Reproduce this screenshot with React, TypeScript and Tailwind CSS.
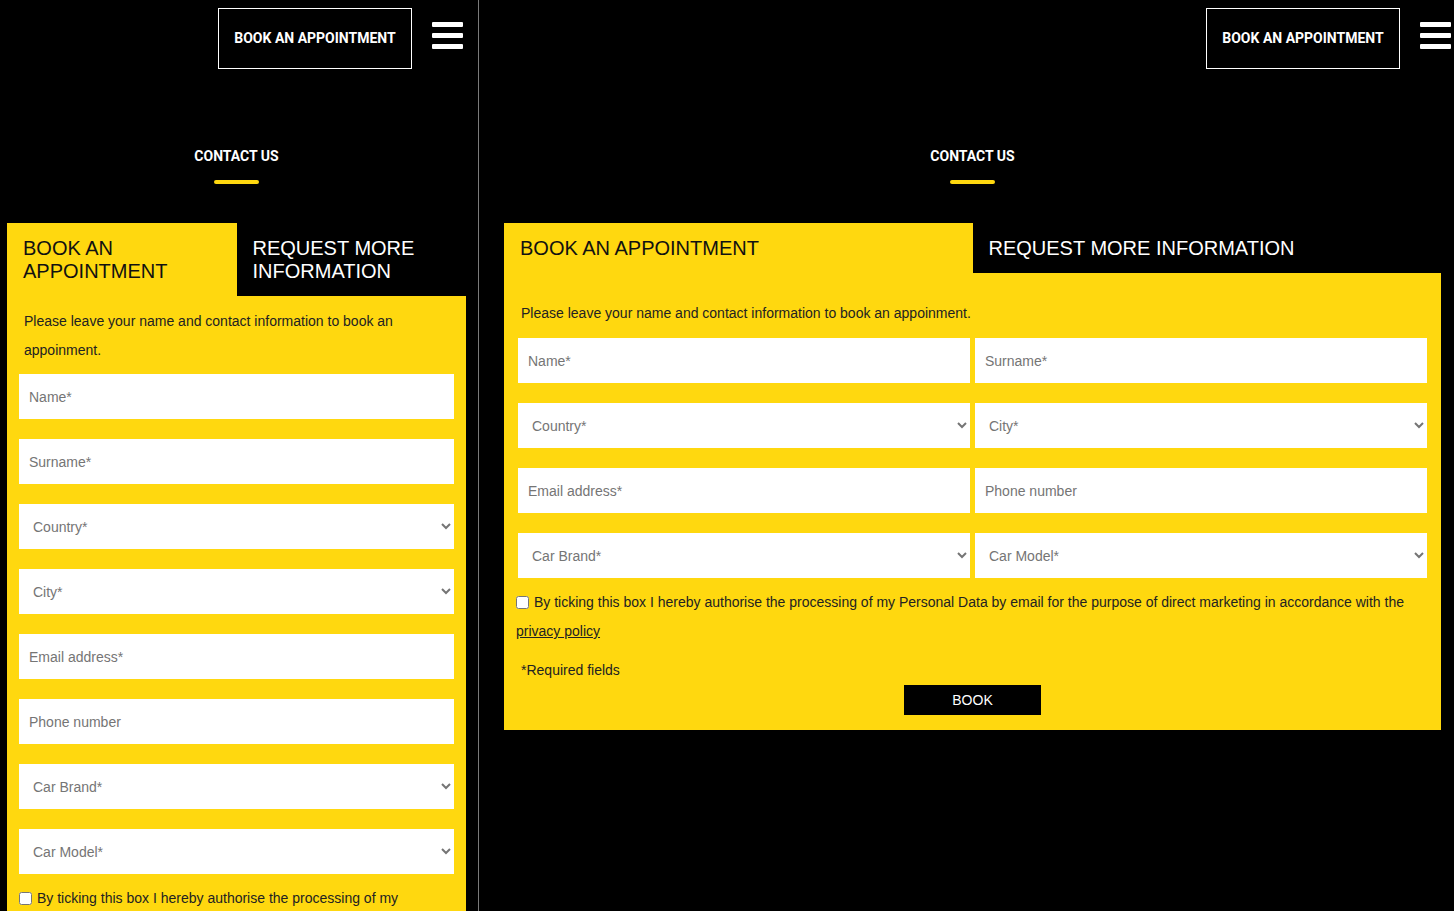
import React from 'react';

const Burger = () => (
  <div className="mt-[14px] flex w-[31px] flex-col gap-[6px]">
    <span className="block h-[5px] rounded-[1px] bg-white" />
    <span className="block h-[5px] rounded-[1px] bg-white" />
    <span className="block h-[5px] rounded-[1px] bg-white" />
  </div>
);

const TopBar = () => (
  <div className="flex items-start justify-end gap-[20px] pt-[8px] pr-[15px]">
    <button className="h-[61px] w-[194px] border border-white font-['Roboto',sans-serif] text-[14px] font-bold text-white">
      BOOK AN APPOINTMENT
    </button>
    <Burger />
  </div>
);

const Heading = () => (
  <div className="flex flex-col items-center">
    <h2 className="mt-[79px] font-['Roboto',sans-serif] text-[14px] leading-[17px] font-bold text-white">CONTACT US</h2>
    <span className="mt-[15px] block h-[4px] w-[45px] rounded-[2px] bg-[#ffd80f]" />
  </div>
);

const Field = ({ label }: { label: string }) => (
  <input
    placeholder={label}
    className="h-[45px] w-full bg-white pl-[10px] text-[14px] text-[#333] outline-none placeholder:text-[#757575]"
  />
);

const Pick = ({ label }: { label: string }) => (
  <select
    defaultValue=""
    className="h-[45px] w-full bg-white pl-[10px] text-[14px] text-[#757575] outline-none"
  >
    <option value="" disabled>
      {label}
    </option>
  </select>
);

const Tabs = () => (
  <div className="mt-[39px] grid grid-cols-2 text-[20px] leading-[23px]">
    <div className="bg-[#ffd80f] pt-[14px] pr-2 pb-[13px] pl-4 text-[#111]">BOOK AN APPOINTMENT</div>
    <div className="bg-black pt-[14px] pr-2 pb-[13px] pl-4 text-white">REQUEST MORE INFORMATION</div>
  </div>
);

const Consent = ({ shift }: { shift: boolean }) => (
  <>
    <div className={shift ? 'mt-[10px] -ml-[2px] text-[14px] leading-[29px] text-[#222]' : 'mt-[10px] text-[14px] leading-[29px] text-[#222]'}>
      <input type="checkbox" className="m-0 mr-[5px] align-[-2px]" />
      By ticking this box I hereby authorise the processing of my Personal Data by email for the purpose of direct
      marketing in accordance with the <a className="underline">privacy policy</a>
    </div>
    <p className="mt-[10px] pl-[3px] text-[14px] leading-[29px] text-[#222]">*Required fields</p>
    <button className="mx-auto block h-[30px] w-[137px] bg-black text-[14px] text-white">BOOK</button>
  </>
);

const MobileView = () => (
  <div className="h-full w-[478px] shrink-0 overflow-hidden">
    <TopBar />
    <div className="w-[473px] px-[7px]">
      <Heading />
      <Tabs />
      <div className="bg-[#ffd80f] px-[12px] pt-[11px] pb-[15px]">
        <p className="mb-[9px] pl-[5px] text-[14px] leading-[29px] text-[#222]">
          Please leave your name and contact information to book an appoinment.
        </p>
        <div className="flex flex-col gap-[20px]">
          <Field label="Name*" />
          <Field label="Surname*" />
          <Pick label="Country*" />
          <Pick label="City*" />
          <Field label="Email address*" />
          <Field label="Phone number" />
          <Pick label="Car Brand*" />
          <Pick label="Car Model*" />
        </div>
        <Consent shift={false} />
      </div>
    </div>
  </div>
);

const DesktopView = () => (
  <div className="h-full w-[987px] shrink-0 overflow-hidden">
    <TopBar />
    <div className="px-[25px]">
      <Heading />
      <Tabs />
      <div className="bg-[#ffd80f] px-[14px] pt-[26px] pb-[15px]">
        <p className="mb-[10px] pl-[3px] text-[14px] leading-[29px] text-[#222]">
          Please leave your name and contact information to book an appoinment.
        </p>
        <div className="grid grid-cols-2 gap-x-[5px] gap-y-[20px]">
          <Field label="Name*" />
          <Field label="Surname*" />
          <Pick label="Country*" />
          <Pick label="City*" />
          <Field label="Email address*" />
          <Field label="Phone number" />
          <Pick label="Car Brand*" />
          <Pick label="Car Model*" />
        </div>
        <Consent shift={true} />
      </div>
    </div>
  </div>
);

export default function App() {
  return (
    <div className="flex h-[911px] w-[1454px] overflow-hidden bg-black font-['Liberation_Sans',Arial,sans-serif]">
      <MobileView />
      <div className="w-px shrink-0 bg-[#7a7a7a]" />
      <DesktopView />
    </div>
  );
}
